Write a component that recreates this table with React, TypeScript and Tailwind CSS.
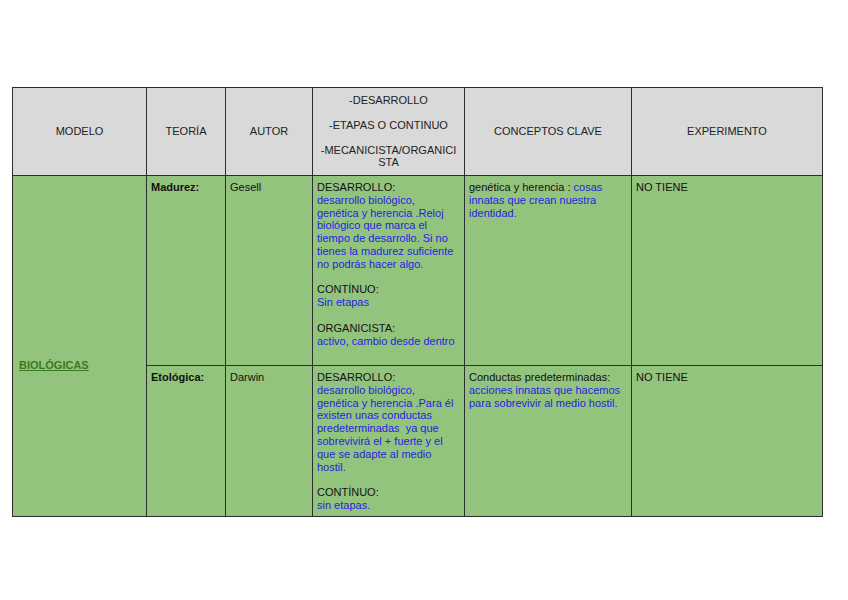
import React from "react";

const B = ({ children }: { children: React.ReactNode }) => (
  <span className="text-[#2323e6]">{children}</span>
);

export default function App() {
  const head = "bg-[#d9d9d9] flex items-center justify-center text-center text-[#222]";
  const cell = "bg-[#93c47d] px-[4px] pt-[5px] text-[#111] leading-[12.8px]";
  return (
    <div className="w-[848px] h-[600px] bg-white pt-[87px] pl-[12px] font-['Liberation_Sans',Arial,sans-serif] text-[11px]">
      <div className="grid grid-cols-[133px_78px_86px_151px_166px_190px] grid-rows-[87px_189px_150px] gap-px bg-[#2e2e2e] p-px w-[811px]">
        <div className={head}>MODELO</div>
        <div className={head}>TEORÍA</div>
        <div className={head}>AUTOR</div>
        <div className={head + " flex-col leading-[12.6px]"}>
          <div>-DESARROLLO</div>
          <div className="mt-[12.4px]">-ETAPAS O CONTINUO</div>
          <div className="mt-[12.4px]">-MECANICISTA/ORGANICI<br />STA</div>
        </div>
        <div className={head}>CONCEPTOS CLAVE</div>
        <div className={head}>EXPERIMENTO</div>

        <div className="row-span-2 bg-[#93c47d] pl-[6px] pt-[181px]">
          <span className="font-bold underline text-[#3a7a1e] leading-[13px]">BIOLÓGICAS</span>
        </div>
        <div className={cell + " font-bold"}>Madurez:</div>
        <div className={cell}>Gesell</div>
        <div className={cell + " whitespace-nowrap"}>
          DESARROLLO:
          <br />
          <B>
            desarrollo biológico,<br />
            genética y herencia .Reloj<br />
            biológico que marca el<br />
            tiempo de desarrollo. Si no<br />
            tienes la madurez suficiente<br />
            no podrás hacer algo.
          </B>
          <br />
          <br />
          CONTÍNUO:
          <br />
          <B>Sin etapas</B>
          <br />
          <br />
          ORGANICISTA:
          <br />
          <B>activo, cambio desde dentro</B>
        </div>
        <div className={cell + " whitespace-nowrap"}>
          genética y herencia : <B>cosas</B>
          <br />
          <B>
            innatas que crean nuestra<br />
            identidad.
          </B>
        </div>
        <div className={cell}>NO TIENE</div>

        <div className={cell + " font-bold"}>Etológica:</div>
        <div className={cell}>Darwin</div>
        <div className={cell + " whitespace-nowrap"}>
          DESARROLLO:
          <br />
          <B>
            desarrollo biológico,<br />
            genética y herencia .Para él<br />
            existen unas conductas<br />
            predeterminadas&nbsp; ya que<br />
            sobrevivirá el + fuerte y el<br />
            que se adapte al medio<br />
            hostil.
          </B>
          <br />
          <br />
          CONTÍNUO:
          <br />
          <B>sin etapas.</B>
        </div>
        <div className={cell + " whitespace-nowrap"}>
          Conductas predeterminadas:
          <br />
          <B>
            acciones innatas que hacemos<br />
            para sobrevivir al medio hostil.
          </B>
        </div>
        <div className={cell}>NO TIENE</div>
      </div>
    </div>
  );
}
